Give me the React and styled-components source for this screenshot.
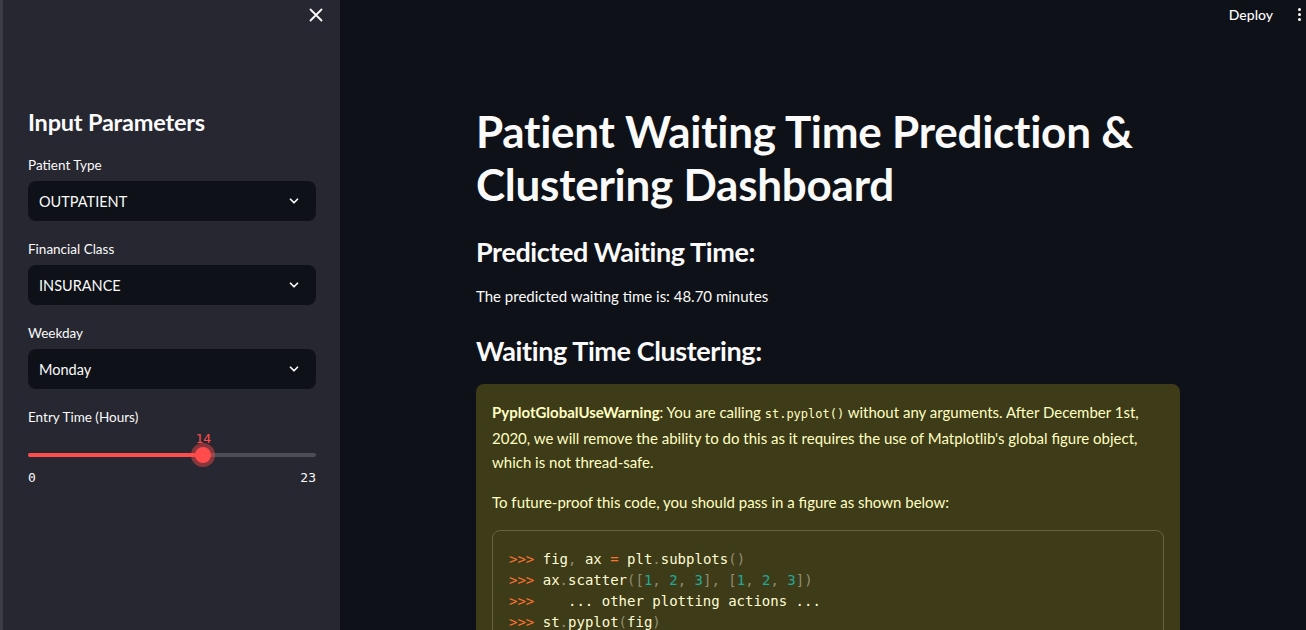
import React from 'react';
import styled, { createGlobalStyle } from 'styled-components';

const GlobalStyle = createGlobalStyle`
  html, body {
    margin: 0;
    padding: 0;
    background: #0e1117;
  }
  body {
    font-family: "Source Sans Pro", Lato, "Noto Sans", sans-serif;
    color: #fafafa;
  }
  * {
    box-sizing: border-box;
  }
`;

const Page = styled.div`
  display: flex;
  width: 1306px;
  height: 630px;
  overflow: hidden;
`;

const Sidebar = styled.aside`
  width: 340px;
  flex-shrink: 0;
  background: #262730;
  border-left: 3px solid #3b3c44;
  padding: 0 24px 0 25px;
`;

const SidebarTop = styled.div`
  height: 30px;
  display: flex;
  align-items: center;
  justify-content: flex-end;
  margin-right: -9px;
`;

const IconButton = styled.button`
  background: none;
  border: none;
  padding: 0;
  color: #fafafa;
  display: flex;
  align-items: center;
  justify-content: center;
  width: 18px;
  height: 18px;
`;

const SidebarTitle = styled.h2`
  font-size: 23.5px;
  font-weight: 700;
  line-height: 29px;
  letter-spacing: -0.2px;
  margin: 78px 0 17px;
`;

const Field = styled.div`
  display: flex;
  flex-direction: column;
  margin-bottom: 17px;
`;

const Label = styled.label`
  font-size: 13.5px;
  line-height: 22px;
  height: 22px;
  margin-bottom: 5px;
`;

const Select = styled.div`
  height: 40px;
  background: #0e1117;
  border-radius: 8px;
  display: flex;
  align-items: center;
  justify-content: space-between;
  padding: 0 15px 0 11px;
  font-size: 14.5px;
`;

const SliderArea = styled.div`
  position: relative;
  height: 37px;
`;

const Track = styled.div`
  position: absolute;
  left: 0;
  right: 0;
  top: 20px;
  height: 4px;
  border-radius: 2px;
  background: #4b4c55;
`;

const TrackFill = styled.div`
  height: 100%;
  border-radius: 2px;
  background: #ff4b4b;
`;

const Thumb = styled.div`
  position: absolute;
  top: 14px;
  width: 16px;
  height: 16px;
  margin-left: -8px;
  border-radius: 50%;
  background: #ff4b4b;
  box-shadow: 0 0 0 4px rgba(255, 75, 75, 0.45);
`;

const ThumbValue = styled.div`
  position: absolute;
  top: -2px;
  transform: translateX(-50%);
  font-family: "DejaVu Sans Mono", "Liberation Mono", monospace;
  font-size: 13px;
  line-height: 16px;
  color: #ff4b4b;
`;

const TickRow = styled.div`
  display: flex;
  justify-content: space-between;
  font-family: "DejaVu Sans Mono", "Liberation Mono", monospace;
  font-size: 13px;
  line-height: 16px;
`;

const Main = styled.main`
  flex: 1;
  min-width: 0;
`;

const Header = styled.header`
  height: 29px;
  display: flex;
  align-items: center;
  justify-content: flex-end;
  gap: 21px;
  padding-right: 2px;
`;

const HeaderLink = styled.span`
  font-size: 14px;
  font-weight: 500;
`;

const Dots = styled.div`
  display: flex;
  flex-direction: column;
  gap: 2px;
  width: 10px;
  align-items: center;

  span {
    width: 3px;
    height: 3px;
    border-radius: 50%;
    background: #fafafa;
  }
`;

const Content = styled.div`
  padding: 0 126px 0 136px;
`;

const Title = styled.h1`
  font-size: 44px;
  font-weight: 700;
  line-height: 53px;
  margin: 76px 0 0;
  letter-spacing: -0.25px;
`;

const Subheader = styled.h3`
  font-size: 27px;
  font-weight: 700;
  line-height: 34px;
  letter-spacing: -0.4px;
  margin: ${p => p.$top}px 0 0;
`;

const Text = styled.p`
  font-size: 15px;
  line-height: 24px;
  margin: 15px 0 0;
`;

const Warning = styled.div`
  margin-top: 16px;
  background: #3e3b18;
  border-radius: 8px;
  padding: 16px;
  color: #ffffc2;
  font-size: 15px;
  line-height: 24px;

  p {
    margin: 0 0 16px;
  }
`;

const InlineCode = styled.code`
  font-family: "DejaVu Sans Mono", "Liberation Mono", monospace;
  font-size: 12px;
`;

const CodeBlock = styled.pre`
  margin: 0;
  border: 1px solid rgba(255, 255, 194, 0.2);
  border-radius: 8px;
  padding: 18px 16px 16px;
  font-family: "DejaVu Sans Mono", "Liberation Mono", monospace;
  font-size: 14px;
  line-height: 21px;
  color: #fffdd5;
`;

const Tok = styled.span`
  color: ${p => (p.$k === 'prompt' ? '#ff7433' : p.$k === 'num' ? '#22a898' : '#908d72')};
`;

const Chevron = () => (
  <svg width="14" height="14" viewBox="0 0 24 24" fill="none" stroke="#fafafa" strokeWidth="3" strokeLinecap="round" strokeLinejoin="round">
    <path d="M6 9l6 6 6-6" />
  </svg>
);

const fields = [
  { label: 'Patient Type', value: 'OUTPATIENT' },
  { label: 'Financial Class', value: 'INSURANCE' },
  { label: 'Weekday', value: 'Monday' },
];

const P = ({ children }) => <Tok $k="prompt">{children}</Tok>;
const N = ({ children }) => <Tok $k="num">{children}</Tok>;
const G = ({ children }) => <Tok>{children}</Tok>;

export default function App() {
  const hour = 14;
  const pct = (hour / 23) * 100;

  return (
    <>
      <GlobalStyle />
      <Page>
        <Sidebar>
          <SidebarTop>
            <IconButton aria-label="Close sidebar">
              <svg width="14" height="14" viewBox="0 0 14 14" stroke="#fafafa" strokeWidth="1.8" strokeLinecap="round">
                <path d="M1.5 1.5l11 11M12.5 1.5l-11 11" />
              </svg>
            </IconButton>
          </SidebarTop>
          <SidebarTitle>Input Parameters</SidebarTitle>
          {fields.map(f => (
            <Field key={f.label}>
              <Label>{f.label}</Label>
              <Select>
                <span>{f.value}</span>
                <Chevron />
              </Select>
            </Field>
          ))}
          <Field>
            <Label>Entry Time (Hours)</Label>
            <SliderArea>
              <Track>
                <TrackFill style={{ width: `${pct}%` }} />
              </Track>
              <ThumbValue style={{ left: `${pct}%` }}>{hour}</ThumbValue>
              <Thumb style={{ left: `${pct}%` }} />
            </SliderArea>
            <TickRow>
              <span>0</span>
              <span>23</span>
            </TickRow>
          </Field>
        </Sidebar>

        <Main>
          <Header>
            <HeaderLink>Deploy</HeaderLink>
            <Dots>
              <span />
              <span />
              <span />
            </Dots>
          </Header>
          <Content>
            <Title>Patient Waiting Time Prediction &amp; Clustering Dashboard</Title>
            <Subheader $top={24}>Predicted Waiting Time:</Subheader>
            <Text>The predicted waiting time is: 48.70 minutes</Text>
            <Subheader $top={26}>Waiting Time Clustering:</Subheader>
            <Warning>
              <p>
                <strong>PyplotGlobalUseWarning</strong>: You are calling <InlineCode>st.pyplot()</InlineCode> without
                any arguments. After December 1st, 2020, we will remove the ability to do this as it requires the use
                of Matplotlib's global figure object, which is not thread-safe.
              </p>
              <p>To future-proof this code, you should pass in a figure as shown below:</p>
              <CodeBlock>
                <P>&gt;&gt;&gt;</P> fig<G>,</G> ax <P>=</P> plt<G>.</G>subplots<G>()</G>
                {'\n'}
                <P>&gt;&gt;&gt;</P> ax<G>.</G>scatter<G>([</G><N>1</N><G>,</G> <N>2</N><G>,</G> <N>3</N><G>],</G> <G>[</G><N>1</N><G>,</G> <N>2</N><G>,</G> <N>3</N><G>])</G>
                {'\n'}
                <P>&gt;&gt;&gt;</P>    ... other plotting actions ...
                {'\n'}
                <P>&gt;&gt;&gt;</P> st<G>.</G>pyplot<G>(</G>fig<G>)</G>
              </CodeBlock>
            </Warning>
          </Content>
        </Main>
      </Page>
    </>
  );
}
